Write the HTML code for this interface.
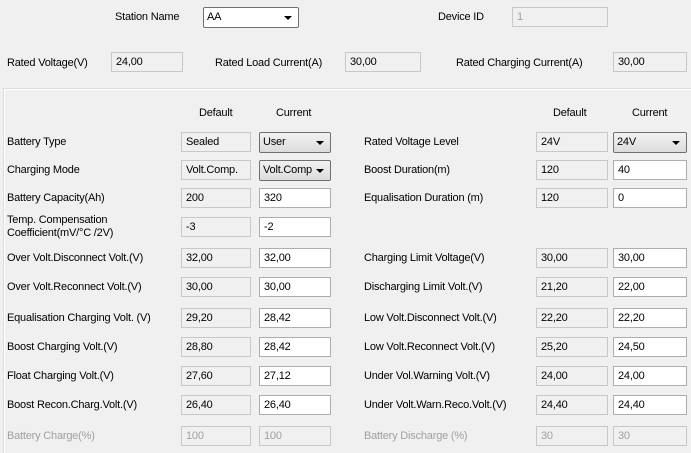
<!DOCTYPE html>
<html><head><style>
html{overflow:hidden;height:453px}
body{margin:0;width:691px;height:453px;background:#f0f0f0;position:relative;overflow:hidden;font-family:"Liberation Sans",sans-serif;font-size:11px;color:#000;letter-spacing:-0.2px}
.l{position:absolute;white-space:nowrap;line-height:13px}
.b{position:absolute;box-sizing:border-box;height:20px;border:1px solid #c8c8c8;background:#f0f0f0;padding:2px 0 0 4px;line-height:14px}
.w{background:#fff;border-color:#abadb3}
.c{background:linear-gradient(#f2f2f2,#dcdcdc);border-color:#707070;border-radius:2px;padding-left:3px}
.c:after{content:"";position:absolute;right:6px;top:8px;border-left:4px solid transparent;border-right:4px solid transparent;border-top:4px solid #000}
.d{color:#a0a0a0}
.panel{position:absolute;left:3px;top:88px;width:688px;height:365px;box-sizing:border-box;border:1px solid #dcdcdc;border-right:none;border-bottom:none;box-shadow:inset 1px 1px 0 #fff}
</style></head><body>
<div class="l" style="left:115px;top:11px">Station Name</div>
<div class="b c w" style="left:203px;top:7px;width:96px;height:21px;background:#fff">AA</div>
<div class="l" style="left:438px;top:11px">Device ID</div>
<div class="b d" style="left:512px;top:7px;width:96px">1</div>

<div class="l" style="left:7px;top:57px">Rated Voltage(V)</div>
<div class="b" style="left:111px;top:52px;width:72px">24,00</div>
<div class="l" style="left:215px;top:57px">Rated Load Current(A)</div>
<div class="b" style="left:345px;top:52px;width:76px">30,00</div>
<div class="l" style="left:456px;top:57px">Rated Charging Current(A)</div>
<div class="b" style="left:613px;top:52px;width:74px">30,00</div>

<div class="panel"></div>
<div class="l" style="left:199px;top:107px">Default</div>
<div class="l" style="left:276px;top:107px">Current</div>
<div class="l" style="left:553px;top:107px">Default</div>
<div class="l" style="left:632px;top:107px">Current</div>

<div class="l" style="left:7px;top:136px">Battery Type</div>
<div class="b" style="left:181px;top:132px;width:70px">Sealed</div>
<div class="b c" style="left:259px;top:132px;width:72px;height:21px">User</div>
<div class="l" style="left:7px;top:164px">Charging Mode</div>
<div class="b" style="left:181px;top:160px;width:70px">Volt.Comp.</div>
<div class="b c" style="left:259px;top:160px;width:72px;height:21px">Volt.Comp</div>
<div class="l" style="left:7px;top:192px">Battery Capacity(Ah)</div>
<div class="b" style="left:181px;top:188px;width:70px">200</div>
<div class="b w" style="left:259px;top:188px;width:72px">320</div>
<div class="l" style="left:7px;top:214px;line-height:13px">Temp. Compensation<br>Coefficient(mV/°C /2V)</div>
<div class="b" style="left:181px;top:217px;width:70px">-3</div>
<div class="b w" style="left:259px;top:217px;width:72px">-2</div>
<div class="l" style="left:7px;top:252px">Over Volt.Disconnect Volt.(V)</div>
<div class="b" style="left:181px;top:248px;width:70px">32,00</div>
<div class="b w" style="left:259px;top:248px;width:72px">32,00</div>
<div class="l" style="left:7px;top:281px">Over Volt.Reconnect Volt.(V)</div>
<div class="b" style="left:181px;top:277px;width:70px">30,00</div>
<div class="b w" style="left:259px;top:277px;width:72px">30,00</div>
<div class="l" style="left:7px;top:312px">Equalisation Charging Volt. (V)</div>
<div class="b" style="left:181px;top:308px;width:70px">29,20</div>
<div class="b w" style="left:259px;top:308px;width:72px">28,42</div>
<div class="l" style="left:7px;top:341px">Boost Charging Volt.(V)</div>
<div class="b" style="left:181px;top:337px;width:70px">28,80</div>
<div class="b w" style="left:259px;top:337px;width:72px">28,42</div>
<div class="l" style="left:7px;top:370px">Float Charging Volt.(V)</div>
<div class="b" style="left:181px;top:366px;width:70px">27,60</div>
<div class="b w" style="left:259px;top:366px;width:72px">27,12</div>
<div class="l" style="left:7px;top:399px">Boost Recon.Charg.Volt.(V)</div>
<div class="b" style="left:181px;top:395px;width:70px">26,40</div>
<div class="b w" style="left:259px;top:395px;width:72px">26,40</div>
<div class="l d" style="left:7px;top:430px">Battery Charge(%)</div>
<div class="b d" style="left:181px;top:426px;width:70px">100</div>
<div class="b d" style="left:259px;top:426px;width:72px">100</div>

<div class="l" style="left:364px;top:136px">Rated Voltage Level</div>
<div class="b" style="left:536px;top:132px;width:72px">24V</div>
<div class="b c" style="left:613px;top:132px;width:74px;height:21px">24V</div>
<div class="l" style="left:364px;top:164px">Boost Duration(m)</div>
<div class="b" style="left:536px;top:160px;width:72px">120</div>
<div class="b w" style="left:613px;top:160px;width:74px">40</div>
<div class="l" style="left:364px;top:192px">Equalisation Duration (m)</div>
<div class="b" style="left:536px;top:188px;width:72px">120</div>
<div class="b w" style="left:613px;top:188px;width:74px">0</div>
<div class="l" style="left:364px;top:252px">Charging Limit Voltage(V)</div>
<div class="b" style="left:536px;top:248px;width:72px">30,00</div>
<div class="b w" style="left:613px;top:248px;width:74px">30,00</div>
<div class="l" style="left:364px;top:281px">Discharging Limit Volt.(V)</div>
<div class="b" style="left:536px;top:277px;width:72px">21,20</div>
<div class="b w" style="left:613px;top:277px;width:74px">22,00</div>
<div class="l" style="left:364px;top:312px">Low Volt.Disconnect Volt.(V)</div>
<div class="b" style="left:536px;top:308px;width:72px">22,20</div>
<div class="b w" style="left:613px;top:308px;width:74px">22,20</div>
<div class="l" style="left:364px;top:341px">Low Volt.Reconnect Volt.(V)</div>
<div class="b" style="left:536px;top:337px;width:72px">25,20</div>
<div class="b w" style="left:613px;top:337px;width:74px">24,50</div>
<div class="l" style="left:364px;top:370px">Under Vol.Warning Volt.(V)</div>
<div class="b" style="left:536px;top:366px;width:72px">24,00</div>
<div class="b w" style="left:613px;top:366px;width:74px">24,00</div>
<div class="l" style="left:364px;top:399px">Under Volt.Warn.Reco.Volt.(V)</div>
<div class="b" style="left:536px;top:395px;width:72px">24,40</div>
<div class="b w" style="left:613px;top:395px;width:74px">24,40</div>
<div class="l d" style="left:364px;top:430px">Battery Discharge (%)</div>
<div class="b d" style="left:536px;top:426px;width:72px">30</div>
<div class="b d" style="left:613px;top:426px;width:74px">30</div>
</body></html>
